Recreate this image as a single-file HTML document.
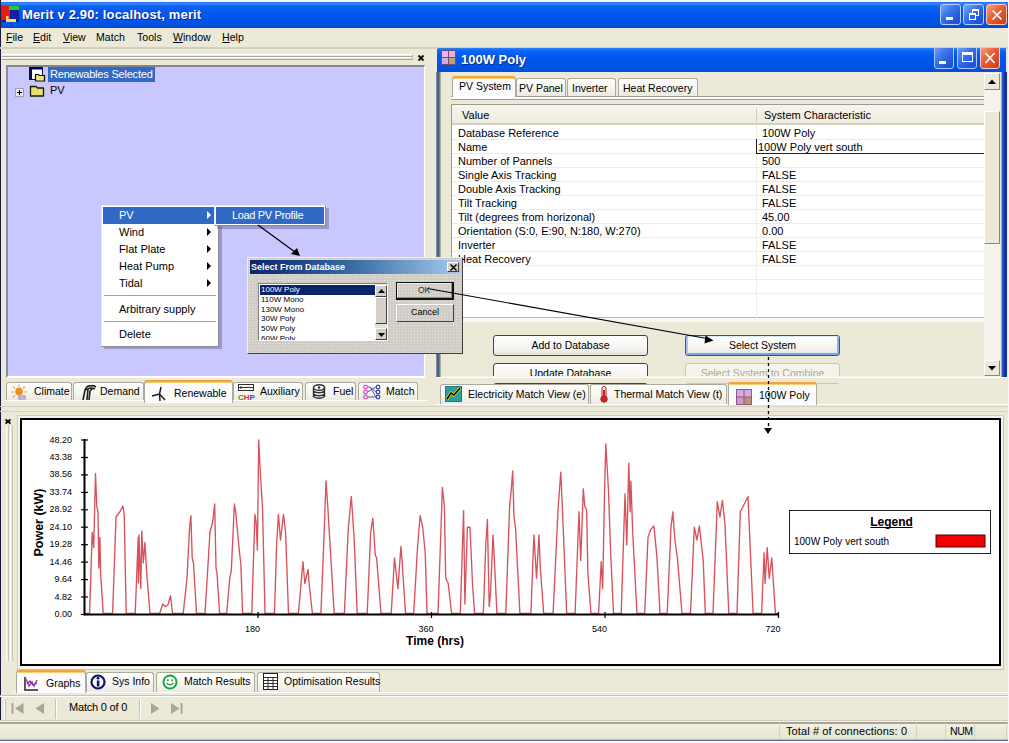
<!DOCTYPE html>
<html><head><meta charset="utf-8">
<style>
*{margin:0;padding:0;box-sizing:border-box}
html,body{width:1009px;height:743px;overflow:hidden;background:#ECE9D8;font-family:"Liberation Sans",sans-serif;font-size:11px;color:#000}
.a{position:absolute;white-space:nowrap}
.u{text-decoration:underline}
svg{overflow:visible}
.xpbtn{position:absolute;width:21px;height:21px;border:1px solid #fff;border-radius:3px;background:linear-gradient(135deg,#79A6FA 0%,#3D74EC 40%,#2458DA 75%,#1E50CC 100%)}
.xpclose{background:linear-gradient(135deg,#F4A888 0%,#E8653E 40%,#D94A22 75%,#C83E1A 100%)}
.tab{position:absolute;background:linear-gradient(#FFFFFF,#F7F6F1 50%,#ECEAE0);border:1px solid #ADAA9C;border-bottom:none;border-radius:3px 3px 0 0;font-size:10.5px;white-space:nowrap}
.tab.sel{background:#FCFCFE;border-top:2px solid #F3A33A;box-shadow:inset 0 1px 0 #F8CC70}
.tab .l{position:absolute}
.tab svg{position:absolute}
.btn{position:absolute;border:1px solid #30447A;border-radius:3px;background:linear-gradient(#FFFFFF,#F4F3EE 70%,#E2E0D6);font-size:10.5px;text-align:center;line-height:19px}
.r3{border:1px solid #fff;border-right-color:#404040;border-bottom-color:#404040}
</style></head><body>
<!-- title -->
<div class="a" style="left:0;top:0;width:1009px;height:2px;background:#F4F6FC"></div>
<div class="a" style="left:0;top:2px;width:1008px;height:26px;background:linear-gradient(#1C6CF4 0%,#3A86FC 6%,#0E62F2 16%,#0058EE 40%,#0054E8 70%,#0052E0 88%,#0848C8 100%)"></div>
<svg class="a" style="left:2px;top:6px" width="17" height="16" viewBox="0 0 17 16">
  <rect x="0" y="0" width="17" height="16" fill="#1020A0"/>
  <rect x="0" y="0" width="8" height="14" fill="#E81818"/>
  <rect x="7" y="0" width="10" height="4" fill="#18D030"/>
  <rect x="4" y="10" width="2.5" height="6" fill="#F8E060"/>
  <rect x="4" y="13" width="10" height="3" fill="#F8E060"/>
</svg>
<div class="a" style="left:22px;top:7px;color:#fff;font-weight:bold;font-size:13px;letter-spacing:0.15px;text-shadow:1px 1px 0 #0A2A9A">Merit v 2.90: localhost, merit</div>
<div class="xpbtn" style="left:940px;top:4px;border-color:#B8D0FF"><div class="a" style="left:5px;top:12px;width:7px;height:3px;background:#fff"></div></div>
<div class="xpbtn" style="left:963px;top:4px;border-color:#B8D0FF">
  <div class="a" style="left:8px;top:4px;width:7px;height:7px;border:1px solid #fff;border-top-width:2px"></div>
  <div class="a" style="left:5px;top:8px;width:7px;height:7px;border:1px solid #fff;border-top-width:2px;background:#3468E4"></div>
</div>
<div class="xpbtn xpclose" style="left:986px;top:4px;border-color:#F8C8B8">
  <svg class="a" style="left:4px;top:4px" width="12" height="12"><path d="M1.5 1.5L10.5 10.5M10.5 1.5L1.5 10.5" stroke="#fff" stroke-width="1.7"/></svg>
</div>
<div class="a" style="left:0;top:0;width:1px;height:743px;background:#1A1A3A"></div>

<!-- menu -->
<div class="a" style="left:6px;top:31px;font-size:10.6px"><span class="u">F</span>ile</div>
<div class="a" style="left:33px;top:31px;font-size:10.6px"><span class="u">E</span>dit</div>
<div class="a" style="left:63px;top:31px;font-size:10.6px"><span class="u">V</span>iew</div>
<div class="a" style="left:96px;top:31px;font-size:10.6px">Match</div>
<div class="a" style="left:137px;top:31px;font-size:10.6px">Tools</div>
<div class="a" style="left:173px;top:31px;font-size:10.6px"><span class="u">W</span>indow</div>
<div class="a" style="left:222px;top:31px;font-size:10.6px"><span class="u">H</span>elp</div>
<div class="a" style="left:0;top:47px;width:1009px;height:2px;background:#D4D0BE"></div>

<!-- left dock header -->
<div class="a" style="left:2px;top:54px;width:411px;height:3px;border-top:1px solid #FFFFFF;border-bottom:1px solid #A8A698;border-right:1px solid #A8A698"></div>
<div class="a" style="left:2px;top:57px;width:411px;height:3px;border-top:1px solid #FFFFFF;border-bottom:1px solid #A8A698;border-right:1px solid #A8A698"></div>
<svg class="a" style="left:417px;top:54px" width="8" height="8"><path d="M1.5 1.5L6.5 6.5M6.5 1.5L1.5 6.5" stroke="#000" stroke-width="1.8"/></svg>

<!-- tree -->
<div class="a" style="left:6px;top:65px;width:419px;height:313px;background:#C8C7FE;border-top:2px solid #848484;border-left:2px solid #8C8CA8;border-right:1px solid #FFFFFF;border-bottom:2px solid #FFFFFF"></div>
<svg class="a" style="left:0;top:0" width="60" height="100">
  <rect x="29.5" y="67.5" width="13" height="12" fill="#FFFFFF" stroke="#101030"/>
  <rect x="29" y="67" width="14" height="2.5" fill="#000070"/>
  <rect x="30" y="69" width="2" height="10" fill="#101030"/>
  <path d="M35.5 74.5h3l1 1h5v5.5h-9z" fill="#E8E480" stroke="#101010" stroke-width="1.2"/>
  <rect x="15.5" y="88.5" width="8" height="8" fill="#E8E8F0" stroke="#A0A0B8"/>
  <path d="M17 92.5h5M19.5 90v5" stroke="#000" stroke-width="1"/>
  <path d="M30.5 86.5h5.5l1.5 1.5h6v8h-13z" fill="#E4E070" stroke="#1A1A00" stroke-width="1.3" stroke-linejoin="round"/>
</svg>
<div class="a" style="left:48px;top:67px;width:107px;height:15px;background:#316AC5;color:#fff;line-height:15px;padding-left:2px;letter-spacing:-0.2px">Renewables Selected</div>
<div class="a" style="left:50px;top:83px;line-height:15px">PV</div>

<!-- splitter bar -->
<div class="a" style="left:428px;top:49px;width:9px;height:357px;background:#ECE9D8"></div>
<!-- left tabs -->
<div class="a" style="left:4px;top:400px;width:424px;height:1px;background:#FFFFFF"></div>
<div class="tab" style="left:6px;top:382px;width:66px;height:18px">
  <svg style="left:3px;top:1px" width="18" height="16">
    <g stroke="#F2A060" stroke-width="1.2"><path d="M9 0.5V3.5M9 12V15M1 8H4M14 8H17M3 2.5L5 4.5M15 2.5L13 4.5M3 13.5L5 11.5M15 13.5L13 11.5"/></g>
    <circle cx="9" cy="7.5" r="3.8" fill="#F08A20"/>
    <rect x="8" y="11" width="8" height="5" fill="#B0A8D0" opacity="0.8"/>
  </svg>
  <span class="l" style="left:27px;top:2px">Climate</span>
</div>
<div class="tab" style="left:73px;top:382px;width:71px;height:18px">
  <svg style="left:7px;top:1px" width="16" height="16">
    <path d="M2 16L4 6L7 5L6 16M8 16L9 7L12 4M4 6Q6 1 10 2Q12 1 15 3M7 5Q10 3 14 5" stroke="#202020" stroke-width="1.6" fill="none"/>
  </svg>
  <span class="l" style="left:26px;top:2px">Demand</span>
</div>
<div class="tab sel" style="left:144px;top:380px;width:89px;height:23px">
  <svg style="left:6px;top:4px" width="18" height="16">
    <path d="M10 1L8.5 8M8.5 8L1 10M8.5 8L14 14M8.5 8L9 15" stroke="#202020" stroke-width="1.5" fill="none"/>
  </svg>
  <span class="l" style="left:29px;top:5px">Renewable</span>
</div>
<div class="tab" style="left:233px;top:382px;width:70px;height:18px">
  <svg style="left:4px;top:1px" width="17" height="16">
    <rect x="0.5" y="0.5" width="15" height="6" fill="none" stroke="#303030"/>
    <path d="M0.5 3.5H15.5M3 2V5M12 3.5H14" stroke="#303030"/>
    <text x="0" y="15.5" font-size="8" font-family="Liberation Sans" font-weight="bold"><tspan fill="#30A040">C</tspan><tspan fill="#E03030">H</tspan><tspan fill="#3050D0">P</tspan></text>
  </svg>
  <span class="l" style="left:26px;top:2px">Auxiliary</span>
</div>
<div class="tab" style="left:305px;top:382px;width:51px;height:18px">
  <svg style="left:6px;top:1px" width="14" height="16">
    <ellipse cx="7" cy="3.5" rx="5.5" ry="2.8" fill="#fff" stroke="#303030" stroke-width="1.4"/>
    <path d="M1.5 3.5V12.5Q7 16 12.5 12.5V3.5M1.5 7Q7 10.5 12.5 7M1.5 10Q7 13.5 12.5 10" fill="none" stroke="#303030" stroke-width="1.4"/>
    <circle cx="7" cy="3.5" r="1.2" fill="#303030"/>
  </svg>
  <span class="l" style="left:27px;top:2px">Fuel</span>
</div>
<div class="tab" style="left:358px;top:382px;width:60px;height:18px">
  <svg style="left:4px;top:1px" width="18" height="16">
    <g fill="none" stroke="#D050D0" stroke-width="1.2"><circle cx="2.5" cy="3" r="1.8"/><circle cx="2.5" cy="8" r="1.8"/><circle cx="2.5" cy="13" r="1.8"/></g>
    <g fill="none" stroke="#3040A0" stroke-width="1.2"><circle cx="15" cy="3" r="1.8"/><circle cx="15" cy="8" r="1.8"/><circle cx="15" cy="13" r="1.8"/></g>
    <path d="M4.5 3H7L13 8M4.5 8L13 3M4.5 13L13 13M7 3L13 13" stroke="#6050C0" stroke-width="1" fill="none"/>
  </svg>
  <span class="l" style="left:27px;top:2px">Match</span>
</div>
<!-- MDI child window -->
<div class="a" style="left:437px;top:48px;width:570px;height:330px;overflow:hidden">
  <div class="a" style="left:0;top:0;width:569px;height:360px;background:linear-gradient(90deg,#0842C8,#0056E4 2px,#0056E4 564px,#0842C8);border-radius:3px 0 0 0"></div>
  <div class="a" style="left:0;top:0;width:569px;height:24px;background:linear-gradient(#2A80FF 0%,#0A66F4 12%,#0058EE 35%,#0054E6 70%,#0050DC 100%);border-radius:3px 0 0 0"></div>
</div>
<svg class="a" style="left:441px;top:50px" width="15" height="15">
  <rect width="15" height="15" fill="#705070"/>
  <rect x="1" y="1" width="6" height="6" fill="#E8B8E8"/><rect x="8" y="1" width="6" height="6" fill="#E0B0E0"/>
  <rect x="1" y="8" width="6" height="6" fill="#D8A8D8"/><rect x="8" y="8" width="6" height="6" fill="#C0A070"/>
</svg>
<div class="a" style="left:461px;top:52px;color:#fff;font-weight:bold;font-size:13px;text-shadow:1px 1px 0 #0A2A9A">100W Poly</div>
<div class="a" style="left:934px;top:48px;width:67px;height:22px;overflow:hidden">
 <div class="xpbtn" style="left:0;top:-3px;width:20px;height:24px;border-color:#A8C8FF"><div class="a" style="left:4px;top:15px;width:7px;height:3px;background:#fff"></div></div>
 <div class="xpbtn" style="left:23px;top:-3px;width:20px;height:24px;border-color:#A8C8FF"><div class="a" style="left:4px;top:6px;width:11px;height:10px;border:1px solid #fff;border-top-width:3px"></div></div>
 <div class="xpbtn xpclose" style="left:46px;top:-3px;width:20px;height:24px;border-color:#F8C8C0"><svg class="a" style="left:3px;top:6px" width="12" height="12"><path d="M1.5 1L10.5 11M10.5 1L1.5 11" stroke="#fff" stroke-width="1.7"/></svg></div>
</div>
<!-- child body -->
<div class="a" style="left:440px;top:72px;width:561px;height:306px;background:#ECE9D8"></div>
<!-- tabs -->
<div class="a" style="left:451px;top:96px;width:533px;height:1px;background:#9D9B90"></div>
<div class="a" style="left:451px;top:97px;width:533px;height:2px;background:#FCFCFE"></div>
<div class="a" style="left:451px;top:99px;width:533px;height:1px;background:#9D9B90"></div>
<div class="tab sel" style="left:452px;top:76px;width:64px;height:21px;border-bottom:none"><span class="l" style="left:6px;top:2px;font-size:10.5px">PV System</span></div>
<div class="tab" style="left:516px;top:78px;width:50px;height:18px"><span class="l" style="left:2px;top:3px">PV Panel</span></div>
<div class="tab" style="left:567px;top:78px;width:49px;height:18px"><span class="l" style="left:4px;top:3px">Inverter</span></div>
<div class="tab" style="left:618px;top:78px;width:80px;height:18px"><span class="l" style="left:4px;top:3px">Heat Recovery</span></div>
<!-- grid -->
<div class="a" style="left:451px;top:104px;width:533px;height:218px;background:#F8F8F4;border-left:1px solid #9D9B90;border-top:1px solid #9D9B90"></div>
<div class="a" style="left:452px;top:105px;width:532px;height:213px;background:#fff;border-bottom:1px solid #B8B6AC"></div>
<div class="a" style="left:452px;top:105px;width:532px;height:20px;background:linear-gradient(#F6F5EE,#EDEBDD);border-bottom:2px solid #D4D0BE"></div>
<div class="a" style="left:756px;top:108px;width:1px;height:14px;background:#CFCBBA"></div>
<div class="a" style="left:462px;top:109px">Value</div>
<div class="a" style="left:764px;top:109px">System Characteristic</div>
<div class="a" style="left:452px;top:126px;width:532px;height:14px;border-bottom:1px solid #EDECE6"></div>
<div class="a" style="left:458px;top:126px;line-height:14px">Database Reference</div>
<div class="a" style="left:762px;top:126px;line-height:14px">100W Poly</div>
<div class="a" style="left:452px;top:140px;width:532px;height:14px;border-bottom:1px solid #EDECE6"></div>
<div class="a" style="left:458px;top:140px;line-height:14px">Name</div>
<div class="a" style="left:758px;top:140px;line-height:14px">100W Poly vert south</div>
<div class="a" style="left:452px;top:154px;width:532px;height:14px;border-bottom:1px solid #EDECE6"></div>
<div class="a" style="left:458px;top:154px;line-height:14px">Number of Pannels</div>
<div class="a" style="left:762px;top:154px;line-height:14px">500</div>
<div class="a" style="left:452px;top:168px;width:532px;height:14px;border-bottom:1px solid #EDECE6"></div>
<div class="a" style="left:458px;top:168px;line-height:14px">Single Axis Tracking</div>
<div class="a" style="left:762px;top:168px;line-height:14px">FALSE</div>
<div class="a" style="left:452px;top:182px;width:532px;height:14px;border-bottom:1px solid #EDECE6"></div>
<div class="a" style="left:458px;top:182px;line-height:14px">Double Axis Tracking</div>
<div class="a" style="left:762px;top:182px;line-height:14px">FALSE</div>
<div class="a" style="left:452px;top:196px;width:532px;height:14px;border-bottom:1px solid #EDECE6"></div>
<div class="a" style="left:458px;top:196px;line-height:14px">Tilt Tracking</div>
<div class="a" style="left:762px;top:196px;line-height:14px">FALSE</div>
<div class="a" style="left:452px;top:210px;width:532px;height:14px;border-bottom:1px solid #EDECE6"></div>
<div class="a" style="left:458px;top:210px;line-height:14px">Tilt (degrees from horizonal)</div>
<div class="a" style="left:762px;top:210px;line-height:14px">45.00</div>
<div class="a" style="left:452px;top:224px;width:532px;height:14px;border-bottom:1px solid #EDECE6"></div>
<div class="a" style="left:458px;top:224px;line-height:14px">Orientation (S:0, E:90, N:180, W:270)</div>
<div class="a" style="left:762px;top:224px;line-height:14px">0.00</div>
<div class="a" style="left:452px;top:238px;width:532px;height:14px;border-bottom:1px solid #EDECE6"></div>
<div class="a" style="left:458px;top:238px;line-height:14px">Inverter</div>
<div class="a" style="left:762px;top:238px;line-height:14px">FALSE</div>
<div class="a" style="left:452px;top:252px;width:532px;height:14px;border-bottom:1px solid #EDECE6"></div>
<div class="a" style="left:458px;top:252px;line-height:14px">Heat Recovery</div>
<div class="a" style="left:762px;top:252px;line-height:14px">FALSE</div>
<div class="a" style="left:452px;top:266px;width:532px;height:14px;border-bottom:1px solid #EDECE6"></div>
<div class="a" style="left:452px;top:280px;width:532px;height:14px;border-bottom:1px solid #EDECE6"></div>
<div class="a" style="left:756px;top:126px;width:1px;height:192px;background:#EDECE6"></div>
<div class="a" style="left:756px;top:139px;width:228px;height:15px;border-left:1px solid #202020;border-bottom:1px solid #202020"></div>
<!-- scrollbar -->
<div class="a" style="left:984px;top:73px;width:16px;height:305px;background:#F4F3EE"></div>
<div class="a r3" style="left:984px;top:73px;width:16px;height:17px;background:#ECE9D8;border-color:#fff #8A8878 #8A8878 #fff"><svg class="a" style="left:3px;top:5px" width="8" height="5"><path d="M0 5L4 0.5L8 5z" fill="#000"/></svg></div>
<div class="a r3" style="left:984px;top:111px;width:16px;height:133px;background:#ECE9D8;border-color:#fff #8A8878 #8A8878 #fff"></div>
<div class="a r3" style="left:984px;top:360px;width:16px;height:16px;background:#ECE9D8;border-color:#fff #8A8878 #8A8878 #fff"><svg class="a" style="left:3px;top:5px" width="8" height="5"><path d="M0 0L4 4.5L8 0z" fill="#000"/></svg></div>
<!-- buttons -->
<div class="btn" style="left:493px;top:335px;width:155px;height:21px">Add to Database</div>
<div class="btn" style="left:685px;top:335px;width:155px;height:21px;border-color:#3A5088;box-shadow:inset 0 1px 0 #DCE8FC,inset 2px 0 0 #A8C4F0,inset -2px 0 0 #8CB0EC,inset 0 -2px 0 #7AA2E6">Select System</div>
<div class="btn" style="left:493px;top:363px;width:155px;height:21px">Update Database</div>
<div class="btn" style="left:685px;top:363px;width:155px;height:21px;border-color:#C9C7BA;color:#ACA899;background:#F5F4EA">Select System to Combine</div>
<!-- MDI area below child -->
<div class="a" style="left:437px;top:376px;width:572px;height:7px;background:#ECE9D8;border-top:1px solid #F4F3EE"></div>
<div class="a" style="left:437px;top:377px;width:572px;height:1px;background:#FFFFFF"></div>
<div class="a" style="left:436px;top:72px;width:5px;height:305px;background:linear-gradient(90deg,#9AA4C8,#4A5890 30%,#586C70 60%,#8A9C80 85%,#D8DCC8)"></div>
<div class="a" style="left:1001px;top:72px;width:6px;height:305px;background:linear-gradient(90deg,#C8D8F0,#2A58D0 20%,#1240B8 55%,#001878 90%,#E8E8F8)"></div>
<!-- MDI tabs -->
<div class="a" style="left:437px;top:404px;width:572px;height:1px;background:#FFFFFF"></div>
<div class="tab" style="left:440px;top:384px;width:149px;height:20px">
  <svg style="left:4px;top:1px" width="17" height="16">
    <rect width="17" height="16" fill="#1A7A8A"/><rect x="1" y="1" width="15" height="14" fill="#2AA0A0"/>
    <path d="M2 13L6 7L9 9L15 2" stroke="#E8E000" stroke-width="3" fill="none"/>
    <path d="M2 13L6 7L9 9L15 2" stroke="#000" stroke-width="1.4" fill="none"/>
  </svg>
  <span class="l" style="left:27px;top:3px">Electricity Match View (e)</span>
</div>
<div class="tab" style="left:590px;top:384px;width:137px;height:20px">
  <svg style="left:8px;top:1px" width="10" height="17">
    <rect x="3" y="0.5" width="4" height="11" rx="2" fill="#fff" stroke="#A02020"/>
    <rect x="4" y="4" width="2" height="8" fill="#E02020"/>
    <circle cx="5" cy="13" r="3.2" fill="#E02020" stroke="#A02020"/>
  </svg>
  <span class="l" style="left:23px;top:3px">Thermal Match View (t)</span>
</div>
<div class="tab sel" style="left:728px;top:382px;width:89px;height:23px">
  <svg style="left:7px;top:5px" width="16" height="16">
    <rect width="16" height="16" fill="#905880"/>
    <rect x="1" y="1" width="6.5" height="6.5" fill="#D8A8E0"/><rect x="8.5" y="1" width="6.5" height="6.5" fill="#D8A8E0"/>
    <rect x="1" y="8.5" width="6.5" height="6.5" fill="#C898D0"/><rect x="8.5" y="8.5" width="6.5" height="6.5" fill="#B89868"/>
  </svg>
  <span class="l" style="left:30px;top:5px">100W Poly</span>
</div>

<!-- chart panel -->
<div class="a" style="left:0;top:406px;width:1009px;height:1px;background:#D6D2C2"></div>
<div class="a" style="left:0;top:411px;width:1009px;height:1px;background:#D6D2C2"></div>
<svg class="a" style="left:4px;top:418px" width="8" height="8"><path d="M1.5 1.5L6.5 5.5M6.5 1.5L1.5 5.5" stroke="#000" stroke-width="1.7"/></svg>
<div class="a" style="left:6px;top:425px;width:3px;height:236px;border-left:1px solid #fff;border-right:1px solid #C8C4B4"></div>
<div class="a" style="left:10px;top:425px;width:3px;height:236px;border-left:1px solid #fff;border-right:1px solid #C8C4B4"></div>
<div class="a" style="left:17px;top:415px;width:987px;height:255px;background:#F4F3EE;border:1px solid #D0CCBC;border-right-color:#C8C4B4;border-bottom-color:#C8C4B4"></div>
<div class="a" style="left:20px;top:418px;width:981px;height:248px;background:#fff;border:2px solid #000"></div>
<svg class="a" style="left:0;top:0" width="1009" height="743">
<polyline fill="none" stroke="#D8525C" stroke-width="1.35" stroke-linejoin="round" points="85.5,613.5 89.6,613.5 92.2,532.3 93.7,547.6 95.5,473.5 96.8,506.7 98.0,511.8 98.8,568.0 99.9,537.4 100.6,573.0 103.2,613.5 112.6,613.5 116.0,517.0 119.8,512.0 122.9,506.0 124.2,514.0 126.2,613.5 135.2,613.5 138.2,537.4 138.5,583.0 139.0,535.0 140.8,588.5 141.8,531.0 143.3,563.0 144.9,542.5 146.7,573.0 150.0,613.5 159.7,613.5 162.8,604.0 165.3,606.5 167.9,605.0 170.5,595.7 172.5,613.5 183.2,613.5 187.0,578.0 189.6,527.0 190.9,515.7 192.2,558.0 193.5,563.0 196.5,613.5 205.0,613.5 210.0,532.0 212.7,522.0 214.7,504.0 216.0,568.0 217.0,573.0 219.6,613.5 226.7,613.5 229.8,578.0 231.3,570.7 234.4,504.0 235.7,512.0 239.5,552.8 240.8,563.0 242.6,613.5 251.8,613.5 254.9,514.4 256.1,522.0 257.4,550.0 258.7,440.0 260.5,476.0 262.5,506.7 265.0,613.5 274.5,613.5 276.6,545.0 278.4,514.4 280.5,540.0 283.5,514.4 285.6,532.3 288.5,613.5 298.4,613.5 303.0,561.7 304.8,583.5 308.1,569.4 309.1,583.5 312.4,613.5 320.9,613.5 324.0,537.4 326.0,481.0 327.8,506.7 329.6,537.4 334.2,613.5 344.4,613.5 348.2,529.7 351.3,496.5 354.1,537.4 357.2,613.5 367.2,613.5 370.7,532.3 372.8,518.2 375.3,555.3 376.6,557.9 381.0,613.5 391.2,613.5 394.5,557.9 397.9,588.6 400.9,546.4 402.2,563.0 405.5,613.5 413.7,613.5 417.5,547.6 420.1,515.7 422.7,527.2 425.2,552.8 427.0,613.5 438.0,613.5 441.3,519.5 442.4,487.5 444.4,506.7 445.7,578.3 448.2,583.5 451.6,613.5 460.3,613.5 462.3,550.2 463.6,510.6 464.9,604.0 467.4,527.2 470.0,527.2 472.5,583.5 474.6,613.5 483.3,613.5 485.9,542.5 487.4,519.5 489.2,606.5 490.5,593.7 493.0,534.9 494.3,557.9 496.9,613.5 505.8,613.5 509.6,506.7 510.9,494.0 512.7,470.9 514.0,517.0 515.5,527.2 519.9,613.5 530.9,613.5 533.9,534.9 536.5,578.3 539.0,534.9 540.3,568.0 543.7,613.5 553.1,613.5 558.2,506.7 560.8,472.2 563.4,532.3 566.7,613.5 575.1,613.5 579.0,511.8 580.7,560.4 583.3,488.8 584.8,506.7 586.6,509.3 587.9,573.2 591.0,613.5 598.6,613.5 601.2,561.7 602.7,588.6 604.5,494.0 605.8,444.0 608.4,488.8 610.9,557.9 613.5,613.5 621.2,613.5 625.0,494.0 626.8,545.0 628.8,463.2 630.1,511.8 630.9,481.2 632.7,532.3 637.0,613.5 644.7,613.5 648.0,537.4 650.6,529.7 653.9,525.9 657.0,557.9 660.0,613.5 667.2,613.5 671.0,527.2 672.8,511.8 674.9,540.0 677.4,557.9 682.0,613.5 690.5,613.5 694.3,527.2 696.9,540.0 699.4,525.9 701.2,542.5 703.2,560.4 705.3,613.5 713.0,613.5 717.3,501.6 719.9,517.0 722.4,500.3 725.0,524.6 728.8,613.5 737.0,613.5 740.3,511.8 742.9,506.7 748.0,496.5 749.3,527.2 753.1,613.5 761.6,613.5 764.1,552.8 765.1,583.5 767.2,547.6 769.2,578.3 771.8,557.9 772.8,573.2 775.4,613.5 778.0,613.5"/>
<path d="M84.5 439V615.5M83.5 614.5H779" stroke="#000" stroke-width="2" fill="none"/>
<path d="M81 614.5H88" stroke="#000" stroke-width="1.2"/>
<text x="72" y="617.0" text-anchor="end" font-size="9" font-family="Liberation Sans">0.00</text>
<path d="M81 597.0H88" stroke="#000" stroke-width="1.2"/>
<text x="72" y="599.5" text-anchor="end" font-size="9" font-family="Liberation Sans">4.82</text>
<path d="M81 579.6H88" stroke="#000" stroke-width="1.2"/>
<text x="72" y="582.1" text-anchor="end" font-size="9" font-family="Liberation Sans">9.64</text>
<path d="M81 562.1H88" stroke="#000" stroke-width="1.2"/>
<text x="72" y="564.6" text-anchor="end" font-size="9" font-family="Liberation Sans">14.46</text>
<path d="M81 544.7H88" stroke="#000" stroke-width="1.2"/>
<text x="72" y="547.2" text-anchor="end" font-size="9" font-family="Liberation Sans">19.28</text>
<path d="M81 527.2H88" stroke="#000" stroke-width="1.2"/>
<text x="72" y="529.8" text-anchor="end" font-size="9" font-family="Liberation Sans">24.10</text>
<path d="M81 509.8H88" stroke="#000" stroke-width="1.2"/>
<text x="72" y="512.3" text-anchor="end" font-size="9" font-family="Liberation Sans">28.92</text>
<path d="M81 492.4H88" stroke="#000" stroke-width="1.2"/>
<text x="72" y="494.9" text-anchor="end" font-size="9" font-family="Liberation Sans">33.74</text>
<path d="M81 474.9H88" stroke="#000" stroke-width="1.2"/>
<text x="72" y="477.4" text-anchor="end" font-size="9" font-family="Liberation Sans">38.56</text>
<path d="M81 457.5H88" stroke="#000" stroke-width="1.2"/>
<text x="72" y="460.0" text-anchor="end" font-size="9" font-family="Liberation Sans">43.38</text>
<path d="M81 440.0H88" stroke="#000" stroke-width="1.2"/>
<text x="72" y="442.5" text-anchor="end" font-size="9" font-family="Liberation Sans">48.20</text>
<path d="M258 612V618" stroke="#000" stroke-width="1.2"/>
<text x="252.5" y="631.5" text-anchor="middle" font-size="9" font-family="Liberation Sans">180</text>
<path d="M431.5 612V618" stroke="#000" stroke-width="1.2"/>
<text x="426.0" y="631.5" text-anchor="middle" font-size="9" font-family="Liberation Sans">360</text>
<path d="M605 612V618" stroke="#000" stroke-width="1.2"/>
<text x="599.5" y="631.5" text-anchor="middle" font-size="9" font-family="Liberation Sans">540</text>
<path d="M778.5 612V618" stroke="#000" stroke-width="1.2"/>
<text x="773.0" y="631.5" text-anchor="middle" font-size="9" font-family="Liberation Sans">720</text>
<text x="435" y="644.6" text-anchor="middle" font-size="12" font-weight="bold" font-family="Liberation Sans">Time (hrs)</text>
<text transform="translate(42.5,522.5) rotate(-90)" text-anchor="middle" font-size="12.5" font-weight="bold" font-family="Liberation Sans">Power (kW)</text>
<rect x="789.5" y="510.5" width="201" height="43" fill="#fff" stroke="#202020" stroke-width="1"/>
<text x="891.5" y="525.7" text-anchor="middle" font-size="12" font-weight="bold" font-family="Liberation Sans">Legend</text>
<path d="M870.5 527.5H912.5" stroke="#000" stroke-width="1"/>
<text x="794" y="544.7" font-size="10" font-family="Liberation Sans">100W Poly vert south</text>
<rect x="936" y="535" width="49" height="12" fill="#F00000" stroke="#500000" stroke-width="1"/>
</svg>

<!-- bottom tabs -->
<div class="a" style="left:14px;top:692px;width:995px;height:1px;background:#FFFFFF"></div>
<div class="tab sel" style="left:16px;top:670px;width:70px;height:23px">
  <svg style="left:7px;top:5px" width="15" height="14">
    <path d="M1 0V13H14" stroke="#202020" stroke-width="1.5" fill="none"/>
    <path d="M2 2L5 9L8 5L10 9L13 3" stroke="#C040A0" stroke-width="1.6" fill="none"/>
    <path d="M3 7L6 4L9 8L13 6" stroke="#6040C0" stroke-width="1.3" fill="none"/>
  </svg>
  <span class="l" style="left:29px;top:5px">Graphs</span>
</div>
<div class="tab" style="left:86px;top:672px;width:68px;height:20px">
  <svg style="left:3px;top:1px" width="16" height="16">
    <circle cx="8" cy="8" r="6.5" fill="#fff" stroke="#101070" stroke-width="2.2"/>
    <rect x="6.8" y="6.5" width="2.6" height="6" fill="#101070"/><circle cx="8" cy="4.2" r="1.4" fill="#101070"/>
  </svg>
  <span class="l" style="left:25px;top:2px">Sys Info</span>
</div>
<div class="tab" style="left:156px;top:672px;width:99px;height:20px">
  <svg style="left:5px;top:1px" width="16" height="16">
    <circle cx="8" cy="8" r="6.5" fill="#fff" stroke="#20A040" stroke-width="2"/>
    <circle cx="5.8" cy="6.3" r="1" fill="#20A040"/><circle cx="10.2" cy="6.3" r="1" fill="#20A040"/>
    <path d="M4.5 9Q8 12.5 11.5 9" stroke="#20A040" stroke-width="1.4" fill="none"/>
  </svg>
  <span class="l" style="left:27px;top:2px">Match Results</span>
</div>
<div class="tab" style="left:257px;top:672px;width:123px;height:20px">
  <svg style="left:5px;top:0px" width="16" height="17">
    <rect x="0.5" y="0.5" width="14" height="16" fill="#fff" stroke="#202020"/>
    <path d="M0.5 4.5H14.5M0.5 7.5H14.5M0.5 10.5H14.5M0.5 13.5H14.5M5 4.5V16.5M10 4.5V16.5" stroke="#303030" stroke-width="1"/>
  </svg>
  <span class="l" style="left:26px;top:2px">Optimisation Results</span>
</div>

<!-- toolbar -->
<div class="a" style="left:0;top:695px;width:1009px;height:1px;background:#C8C4B4"></div>
<div class="a" style="left:0;top:696px;width:1009px;height:1px;background:#FFFFFF"></div>
<div class="a" style="left:4px;top:699px;width:2px;height:20px;border-left:1px solid #fff;border-right:1px solid #C8C4B4"></div>
<svg class="a" style="left:0;top:0" width="200" height="743">
  <path d="M12.5 703V714" stroke="#A8A698" stroke-width="2"/>
  <path d="M23.5 703L15 708.5L23.5 714z" fill="#A8A698"/>
  <path d="M44 703L35.5 708.5L44 714z" fill="#A8A698"/>
  <path d="M151 703L159.5 708.5L151 714z" fill="#A8A698"/>
  <path d="M171 703L179.5 708.5L171 714z" fill="#A8A698"/>
  <path d="M181.5 703V714" stroke="#A8A698" stroke-width="2"/>
  <path d="M55.5 699V719M139.5 699V719" stroke="#C8C4B4"/>
  <path d="M56.5 699V719M140.5 699V719" stroke="#FFFFFF"/>
</svg>
<div class="a" style="left:69px;top:701px;letter-spacing:-0.2px">Match 0 of 0</div>
<!-- status -->
<div class="a" style="left:0;top:720px;width:1009px;height:1px;background:#D0CCBC"></div>
<div class="a" style="left:0;top:721px;width:1009px;height:1px;background:#F4F2EA"></div>
<div class="a" style="left:0;top:722px;width:1009px;height:2px;background:#A8A498"></div>
<div class="a" style="left:0;top:724px;width:1009px;height:16px;background:linear-gradient(#F2F0E8,#ECE9D8 40%,#E8E5D2)"></div>
<div class="a" style="left:779px;top:723px;width:1px;height:16px;background:#D6D2C2"></div>
<div class="a" style="left:916px;top:723px;width:1px;height:16px;background:#D6D2C2"></div>
<div class="a" style="left:945px;top:723px;width:1px;height:16px;background:#D6D2C2"></div>
<div class="a" style="left:974px;top:723px;width:1px;height:16px;background:#D6D2C2"></div>
<div class="a" style="left:1006px;top:723px;width:1px;height:16px;background:#D6D2C2"></div>
<div class="a" style="left:786px;top:725px;letter-spacing:0.1px">Total # of connections: 0</div>
<div class="a" style="left:950px;top:725px;font-size:10.5px;letter-spacing:-0.4px">NUM</div>
<div class="a" style="left:0;top:739px;width:1009px;height:1px;background:#B8BCD0"></div>
<div class="a" style="left:0;top:740px;width:1009px;height:1px;background:#606C9C"></div>
<div class="a" style="left:0;top:741px;width:1009px;height:2px;background:#F8FAFF"></div>
<!-- context menu -->
<div class="a" style="left:104px;top:208px;width:118px;height:141px;background:rgba(70,70,120,0.35)"></div>
<div class="a" style="left:101px;top:205px;width:118px;height:142px;background:#FFFFFF;border:1px solid #8C8C8C;border-top-color:#E8E8E8;border-left-color:#E8E8E8"></div>
<div class="a" style="left:103px;top:207px;width:111px;height:17px;background:#316AC5"></div>
<div class="a" style="left:119px;top:209px;color:#fff">PV</div>
<div class="a" style="left:119px;top:226px">Wind</div>
<div class="a" style="left:119px;top:243px">Flat Plate</div>
<div class="a" style="left:119px;top:260px">Heat Pump</div>
<div class="a" style="left:119px;top:277px">Tidal</div>
<div class="a" style="left:104px;top:295px;width:112px;height:1px;background:#A0A0A0"></div>
<div class="a" style="left:119px;top:303px">Arbitrary supply</div>
<div class="a" style="left:104px;top:321px;width:112px;height:1px;background:#A0A0A0"></div>
<div class="a" style="left:119px;top:328px">Delete</div>
<svg class="a" style="left:205px;top:209px" width="8" height="80">
 <path d="M2 2L6 6L2 10z" fill="#fff"/>
 <path d="M2 19L6 23L2 27z" fill="#000"/>
 <path d="M2 36L6 40L2 44z" fill="#000"/>
 <path d="M2 53L6 57L2 61z" fill="#000"/>
 <path d="M2 70L6 74L2 78z" fill="#000"/>
</svg>
<!-- submenu -->
<div class="a" style="left:217px;top:208px;width:112px;height:21px;background:rgba(70,70,120,0.35)"></div>
<div class="a" style="left:214px;top:205px;width:112px;height:21px;background:#FFFFFF;border:1px solid #8C8C8C;border-top-color:#E8E8E8;border-left-color:#E8E8E8"></div>
<div class="a" style="left:216px;top:207px;width:108px;height:17px;background:#316AC5"></div>
<div class="a" style="left:232px;top:209px;color:#fff;letter-spacing:-0.35px">Load PV Profile</div>

<!-- dialog -->
<div class="a" style="left:247px;top:257px;width:216px;height:97px;background:#D0CDC6;border:1px solid #F0F0F0;border-right-color:#404040;border-bottom-color:#404040;background-image:radial-gradient(#E8E6E0 30%,transparent 45%);background-size:3px 3px"></div>
<div class="a" style="left:250px;top:260px;width:210px;height:14px;background:linear-gradient(90deg,#0A246A,#3A6EA5 50%,#A6CAF0)"></div>
<div class="a" style="left:251px;top:261px;color:#fff;font-weight:bold;font-size:9px;line-height:12px">Select From Database</div>
<div class="a r3" style="left:447px;top:262px;width:12px;height:10px;background:#D4D0C8"><svg class="a" style="left:2px;top:1px" width="7" height="7"><path d="M0.5 0.5L6.5 6.5M6.5 0.5L0.5 6.5" stroke="#000" stroke-width="1.5"/></svg></div>
<div class="a" style="left:258px;top:283px;width:130px;height:58px;background:#fff;border:1px solid #808080;border-right-color:#fff;border-bottom-color:#fff;overflow:hidden">
  <div class="a" style="left:1px;top:1px;width:115px;height:10px;background:#0A246A"></div>
  <div class="a" style="left:2px;top:1px;font-size:8px;line-height:9.8px;color:#000">
   <div style="color:#fff">100W Poly</div><div>110W Mono</div><div>130W Mono</div><div>30W Poly</div><div>50W Poly</div><div>60W Poly</div>
  </div>
  <div class="a" style="left:116px;top:0px;width:12px;height:56px;background:#E4E2DC"></div>
  <div class="a r3" style="left:116px;top:1px;width:12px;height:12px;background:#D4D0C8"><svg class="a" style="left:2px;top:3px" width="7" height="4"><path d="M0 4L3.5 0L7 4z" fill="#000"/></svg></div>
  <div class="a r3" style="left:116px;top:13px;width:12px;height:27px;background:#D4D0C8"></div>
  <div class="a r3" style="left:116px;top:44px;width:12px;height:12px;background:#D4D0C8"><svg class="a" style="left:2px;top:4px" width="7" height="4"><path d="M0 0L3.5 4L7 0z" fill="#000"/></svg></div>
</div>
<div class="a" style="left:396px;top:282px;width:58px;height:18px;border:1px solid #101010;border-width:1px 2px 2px 1px"><div class="a" style="left:0;top:0;width:55px;height:15px;border:1px solid #F0F0F0;border-right-color:#909090;border-bottom-color:#909090"></div></div>
<div class="a" style="left:418px;top:285px;font-size:8.5px;color:#303030">OK</div>
<div class="a r3" style="left:396px;top:304px;width:58px;height:18px"></div>
<div class="a" style="left:411px;top:307px;font-size:9px">Cancel</div>

<!-- annotation arrows -->
<svg class="a" style="left:0;top:0" width="1009" height="743">
 <path d="M258 225L295 252" stroke="#000" stroke-width="1.2"/>
 <path d="M300 256L291 254L297 248z" fill="#000"/>
 <path d="M427.5 288.5L707 338.5" stroke="#000" stroke-width="1.2"/>
 <path d="M713.5 340.5L704.5 343.5L705.5 335.5z" fill="#000"/>
 <path d="M768.5 357V428" stroke="#000" stroke-width="1.3" stroke-dasharray="3,3"/>
 <path d="M764 428H772L768 434z" fill="#000"/>
</svg>
<div class="a" style="left:1008px;top:0;width:1px;height:743px;background:#F8F8FC"></div>
</body></html>
